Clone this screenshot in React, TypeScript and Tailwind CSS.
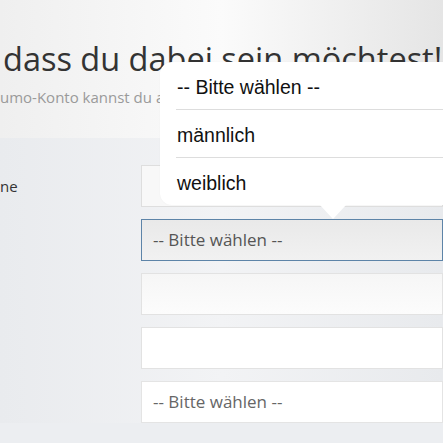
import React from 'react';

const options = ['-- Bitte wählen --', 'männlich', 'weiblich'];

const App: React.FC = () => {
  return (
    <div className="relative w-[443px] h-[443px] overflow-hidden bg-[#eceef1] font-['Open_Sans',sans-serif]">
      {/* header */}
      <div className="h-[138px] bg-gradient-to-r from-[#efefef] via-[#fbfbfb] to-[#e5e5e5] pt-[41px] overflow-hidden">
        <h1 className="pl-[3px] text-[32.5px] leading-[36px] text-[#333] whitespace-nowrap font-normal">
          dass du dabei sein möchtest!
        </h1>
        <p className="mt-[10px] text-[15px] leading-[20px] text-[#9a9a9a] whitespace-nowrap">
          umo-Konto kannst du alle Vorteile nutzen.
        </p>
      </div>

      {/* form */}
      <div className="bg-gradient-to-r from-[#e9ebee] via-[#f2f3f5] to-[#e8eaed] pt-[27px] flex flex-col gap-[12px]">
        <div className="flex h-[42px]">
          <div className="w-[141px] flex items-center text-[15px] leading-[20px] text-[#333]">ne</div>
          <div className="flex-1 border border-[#dedede] bg-[#f8f8f8]" />
        </div>
        <div className="flex h-[42px]">
          <div className="w-[141px]" />
          <div className="flex-1 flex items-center pl-[11px] border border-[#5d84a8] bg-gradient-to-b from-[#e9e9e9] to-[#f1f1f1] text-[17px] text-[#555]">
            -- Bitte wählen --
          </div>
        </div>
        <div className="flex h-[42px]">
          <div className="w-[141px]" />
          <div className="flex-1 border border-[#e2e2e2] bg-gradient-to-b from-[#f6f6f6] to-[#fcfcfc]" />
        </div>
        <div className="flex h-[42px]">
          <div className="w-[141px]" />
          <div className="flex-1 border border-[#e2e2e2] bg-white" />
        </div>
        <div className="flex h-[42px]">
          <div className="w-[141px]" />
          <div className="flex-1 flex items-center pl-[11px] border border-[#e4e4e4] bg-white text-[17px] text-[#666]">
            -- Bitte wählen --
          </div>
        </div>
      </div>

      {/* popover */}
      <div className="absolute left-[160px] top-[62px] w-[320px] h-[143px] bg-white rounded-[12px] shadow-[0_0_2px_rgba(0,0,0,0.04)] pl-[16px] font-['Liberation_Sans',Arial,sans-serif] text-[19.5px] text-[#111]">
        {options.map((o, i) => (
          <div
            key={o}
            className={`flex items-center pl-[1px] pt-[4px] ${i === 2 ? 'h-[47px]' : 'h-[48px]'} ${
              i < 2 ? 'border-b border-[#dddddd]' : ''
            }`}
          >
            {o}
          </div>
        ))}
      </div>
      <svg className="absolute left-[319px] top-[204px]" width="28" height="15" viewBox="0 0 28 15">
        <polygon points="0,0 28,0 14,15" fill="#ffffff" />
      </svg>
    </div>
  );
};

export default App;
